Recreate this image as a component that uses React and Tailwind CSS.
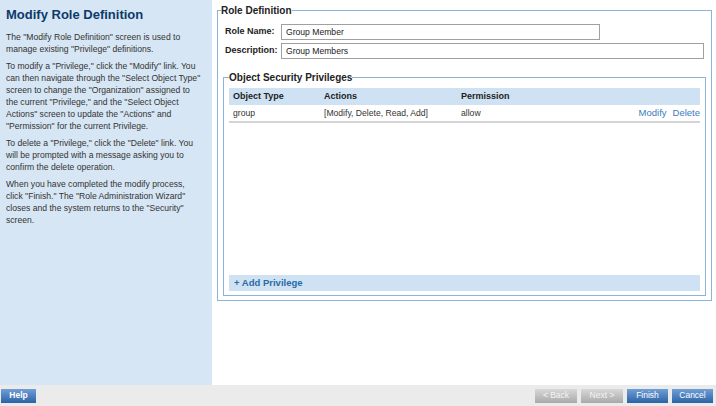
const help = [
  ['The "Modify Role Definition" screen is used to', 'manage existing "Privilege" definitions.'],
  [
    'To modify a "Privilege," click the "Modify" link. You',
    'can then navigate through the "Select Object Type"',
    'screen to change the "Organization" assigned to',
    'the current "Privilege," and the "Select Object',
    'Actions" screen to update the "Actions" and',
    '"Permission" for the current Privilege.',
  ],
  [
    'To delete a "Privilege," click the "Delete" link. You',
    'will be prompted with a message asking you to',
    'confirm the delete operation.',
  ],
  [
    'When you have completed the modify process,',
    'click "Finish." The "Role Administration Wizard"',
    'closes and the system returns to the "Security"',
    'screen.',
  ],
];

const BlueButton = ({ children, className = '' }) => (
  <button
    className={`h-[14px] bg-gradient-to-b from-[#6f9fd6] to-[#2c62a6] text-[8.5px] text-white ${className}`}
  >
    {children}
  </button>
);

const GrayButton = ({ children }) => (
  <button className="h-[14px] w-[42px] bg-gradient-to-b from-[#d9d9d9] to-[#a9a9a9] text-[8.5px] text-[#f4f4f4]">
    {children}
  </button>
);

export default function App() {
  return (
    <div
      className="flex h-[406px] w-[716px] flex-col bg-white text-[#333]"
      style={{ fontFamily: '"Liberation Sans", Arial, sans-serif' }}
    >
      <div className="flex flex-1">
        {/* help panel */}
        <div className="w-[212px] bg-[#d7e6f4] pl-[6px] pt-[7px]">
          <h1 className="text-[13px] font-bold leading-[16px] text-[#0d3a6a]">Modify Role Definition</h1>
          <div className="mt-[8px] flex flex-col gap-[5px] text-[8.6px] leading-[12px]">
            {help.map((lines, i) => (
              <p key={i} className="whitespace-nowrap">
                {lines.map((l, j) => (
                  <span key={j}>
                    {l}
                    <br />
                  </span>
                ))}
              </p>
            ))}
          </div>
        </div>

        {/* main form */}
        <div className="flex-1 pl-[5px] pr-[4px] pt-[4px]">
          <fieldset className="h-[297px] border border-[#8db3dc] px-[5px]">
            <legend className="-ml-[2px] text-[10px] font-bold leading-[13px] text-[#222]">Role Definition</legend>
            <div className="mx-[2px] mt-[7px] flex flex-col gap-[3px] text-[9px]">
              <div className="flex items-center">
                <label className="w-[56px] font-bold text-[#222]">Role Name:</label>
                <div className="flex h-[16px] w-[319px] items-center border border-[#a0a0a0] px-[4px] text-[8.6px] text-[#222]">
                  Group Member
                </div>
              </div>
              <div className="flex items-center">
                <label className="w-[56px] font-bold text-[#222]">Description:</label>
                <div className="flex h-[16px] flex-1 items-center border border-[#a0a0a0] px-[4px] text-[8.6px] text-[#222]">
                  Group Members
                </div>
              </div>
            </div>

            <fieldset className="mt-[12px] border border-[#8db3dc] px-[5px] pb-[4px]">
              <legend className="text-[10px] font-bold leading-[13px] text-[#222]">Object Security Privileges</legend>
              <div className="mt-[4px] flex h-[187px] flex-col">
                <div className="grid h-[17px] grid-cols-[91px_137px_1fr] items-center bg-[#cfe2f3] text-[9px] font-bold text-[#222]">
                  <span className="pl-[4px]">Object Type</span>
                  <span className="pl-[4px]">Actions</span>
                  <span className="pl-[4px]">Permission</span>
                </div>
                <div className="grid h-[18px] grid-cols-[91px_137px_1fr] items-center border-b-2 border-[#d4d4d4] text-[8.6px]">
                  <span className="pl-[4px]">group</span>
                  <span className="pl-[4px]">[Modify, Delete, Read, Add]</span>
                  <div className="flex items-center pl-[4px]">
                    <span className="flex-1">allow</span>
                    <a className="text-[9.5px] text-[#3a7bbd]">Modify</a>
                    <a className="ml-[6px] text-[9.5px] text-[#3a7bbd]">Delete</a>
                  </div>
                </div>
              </div>
              <div className="flex h-[16px] items-center bg-[#cfe2f3] pl-[5px] text-[9.5px] font-bold text-[#2a6aa6]">
                + Add Privilege
              </div>
            </fieldset>
          </fieldset>
        </div>
      </div>

      {/* footer */}
      <div className="flex h-[21px] items-center bg-[#ebebeb] px-[1px]">
        <BlueButton className="w-[35px] font-bold">Help</BlueButton>
        <div className="ml-auto flex gap-[4px] pr-[2px]">
          <GrayButton>&lt; Back</GrayButton>
          <GrayButton>Next &gt;</GrayButton>
          <BlueButton className="w-[41px]">Finish</BlueButton>
          <BlueButton className="w-[41px]">Cancel</BlueButton>
        </div>
      </div>
    </div>
  );
}
